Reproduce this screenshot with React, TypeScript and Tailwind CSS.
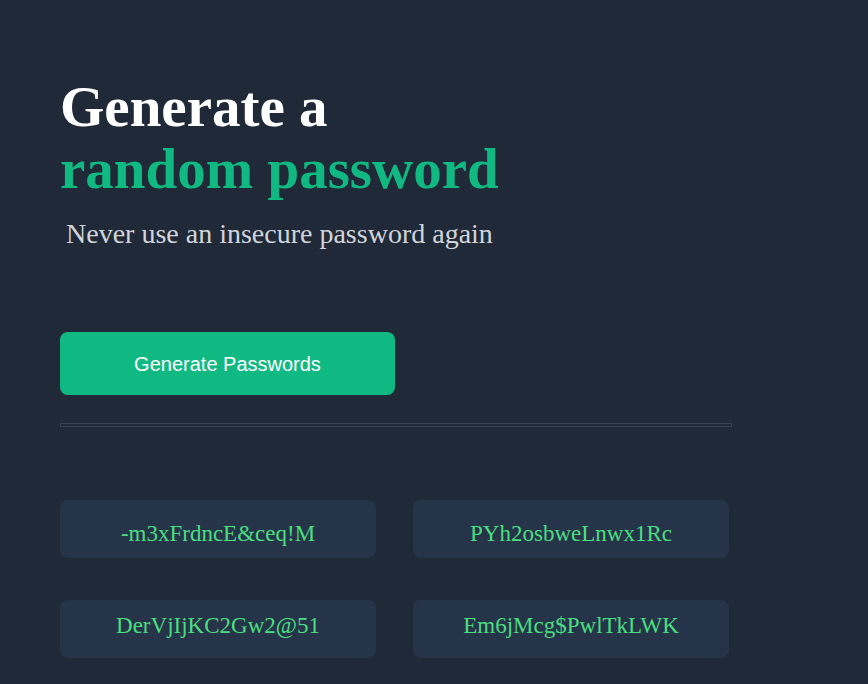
import React, { useState } from 'react';

const CHARS = 'ABCDEFGHIJKLMNOPQRSTUVWXYZabcdefghijklmnopqrstuvwxyz0123456789~`!@#$%^&*()_-+={[}]|:;<>.?/';

const initialPasswords = ['-m3xFrdncE&ceq!M', 'PYh2osbweLnwx1Rc', 'DerVjIjKC2Gw2@51', 'Em6jMcg$PwlTkLWK'];

const makePassword = (length: number) => {
  let out = '';
  for (let i = 0; i < length; i++) {
    out += CHARS[Math.floor(Math.random() * CHARS.length)];
  }
  return out;
};

const App: React.FC = () => {
  const [passwords, setPasswords] = useState<string[]>(initialPasswords);

  const handleGenerate = () => {
    setPasswords(passwords.map(() => makePassword(16)));
  };

  return (
    <div className="min-h-screen w-full bg-[#1f2937] px-[60px] pt-[76px] font-['Liberation_Serif',serif]">
      <h1 className="text-[57px] font-bold leading-[62px] text-white">
        Generate a
        <br />
        <span className="text-[#10b981]">random password</span>
      </h1>
      <p className="mt-[18px] pl-[6px] text-[28px] leading-[32px] text-[#d1d5db]">
        Never use an insecure password again
      </p>

      <button
        onClick={handleGenerate}
        className="mt-[82px] h-[63px] w-[335px] rounded-lg bg-[#10b981] font-['Liberation_Sans',sans-serif] text-[20px] text-white"
      >
        Generate Passwords
      </button>

      <div className="mt-[28px] h-[4px] w-[672px] border border-[#364152]" />

      <div className="mt-[73px] grid w-[669px] grid-cols-2 gap-x-[37px] gap-y-[42px]">
        {passwords.map((pw, i) => (
          <div
            key={i}
            className={`flex h-[58px] items-center justify-center rounded-lg bg-[#263449] text-[23px] text-[#4ade80] ${
              i < 2 ? 'pt-[10px]' : 'pb-[6px]'
            }`}
          >
            {pw}
          </div>
        ))}
      </div>
    </div>
  );
};

export default App;
